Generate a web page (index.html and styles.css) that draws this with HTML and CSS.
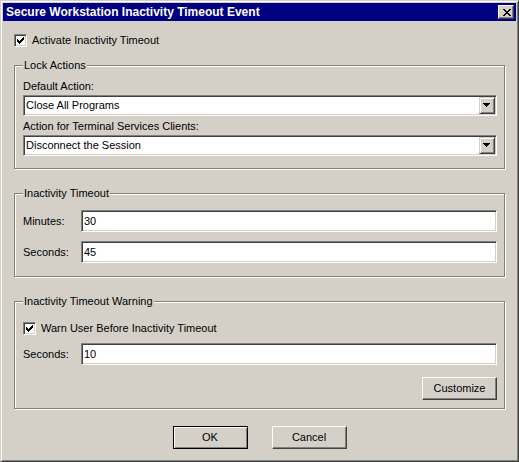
FILE: index.html
```html
<!DOCTYPE html>
<html lang="en">
<head>
<meta charset="utf-8">
<title>Secure Workstation Inactivity Timeout Event</title>
<link rel="stylesheet" href="styles.css">
</head>
<body>
<div class="window">
  <div class="titlebar">
    <span class="title">Secure Workstation Inactivity Timeout Event</span>
    <span class="caption-btn">
      <svg width="8" height="7" viewBox="0 0 8 7" shape-rendering="crispEdges"><path fill="#000" d="M0 0h2v1h-2zM6 0h2v1h-2zM1 1h2v1h-2zM5 1h2v1h-2zM2 2h4v1h-4zM3 3h2v1h-2zM2 4h4v1h-4zM1 5h2v1h-2zM5 5h2v1h-2zM0 6h2v1h-2zM6 6h2v1h-2z"/></svg>
    </span>
  </div>
  <div class="content">
    <div class="check">
      <span class="box"><svg width="9" height="9" viewBox="0 0 9 9" shape-rendering="crispEdges"><path fill="#000" d="M7 1h1v1h-1zM6 2h2v1h-2zM1 3h1v1h-1zM5 3h3v1h-3zM1 4h2v1h-2zM4 4h3v1h-3zM1 5h5v1h-5zM2 6h3v1h-3zM3 7h1v1h-1z"/></svg></span>
      <span>Activate Inactivity Timeout</span>
    </div>

    <fieldset class="group lock">
      <legend>Lock Actions</legend>
      <div class="field">
        <div class="field-label">Default Action:</div>
        <div class="combo">
          <span class="combo-text">Close All Programs</span>
          <span class="drop"><svg width="7" height="4" viewBox="0 0 7 4" shape-rendering="crispEdges"><path fill="#000" d="M0 0h7v1h-7zM1 1h5v1h-5zM2 2h3v1h-3zM3 3h1v1h-1z"/></svg></span>
        </div>
      </div>
      <div class="field field-next">
        <div class="field-label">Action for Terminal Services Clients:</div>
        <div class="combo">
          <span class="combo-text">Disconnect the Session</span>
          <span class="drop"><svg width="7" height="4" viewBox="0 0 7 4" shape-rendering="crispEdges"><path fill="#000" d="M0 0h7v1h-7zM1 1h5v1h-5zM2 2h3v1h-3zM3 3h1v1h-1z"/></svg></span>
        </div>
      </div>
    </fieldset>

    <fieldset class="group timeout">
      <legend>Inactivity Timeout</legend>
      <div class="row">
        <span class="row-label">Minutes:</span>
        <input class="edit" type="text" value="30">
      </div>
      <div class="row row-next">
        <span class="row-label">Seconds:</span>
        <input class="edit" type="text" value="45">
      </div>
    </fieldset>

    <fieldset class="group warning">
      <legend>Inactivity Timeout Warning</legend>
      <div class="check">
        <span class="box"><svg width="9" height="9" viewBox="0 0 9 9" shape-rendering="crispEdges"><path fill="#000" d="M7 1h1v1h-1zM6 2h2v1h-2zM1 3h1v1h-1zM5 3h3v1h-3zM1 4h2v1h-2zM4 4h3v1h-3zM1 5h5v1h-5zM2 6h3v1h-3zM3 7h1v1h-1z"/></svg></span>
        <span>Warn User Before Inactivity Timeout</span>
      </div>
      <div class="row warn-row">
        <span class="row-label">Seconds:</span>
        <input class="edit" type="text" value="10">
      </div>
      <div class="group-actions">
        <button class="btn" type="button">Customize</button>
      </div>
    </fieldset>

    <div class="dialog-buttons">
      <button class="btn default" type="button">OK</button>
      <button class="btn" type="button">Cancel</button>
    </div>
  </div>
</div>
</body>
</html>
```

FILE: styles.css
```css
* {
  box-sizing: border-box;
}

html,
body {
  margin: 0;
  background: #d4d0c8;
}

body {
  font-family: "Liberation Sans", Arial, sans-serif;
  font-size: 11px;
  line-height: 13px;
  color: #000;
}

.window {
  width: 519px;
  height: 462px;
  border: 1px solid;
  border-color: #d4d0c8 #404040 #404040 #d4d0c8;
  box-shadow: inset 1px 1px #fff, inset -1px -1px #808080;
  padding: 2px;
  display: flex;
  flex-direction: column;
}

.titlebar {
  height: 18px;
  flex: none;
  background: #000080;
  color: #fff;
  display: flex;
  align-items: center;
  justify-content: space-between;
  padding: 0 2px 0 3px;
}

.title {
  font-weight: bold;
  font-size: 12px;
  line-height: 18px;
  white-space: nowrap;
}

.caption-btn {
  width: 16px;
  height: 14px;
  border: 1px solid;
  border-color: #fff #404040 #404040 #fff;
  box-shadow: inset -1px -1px #808080;
  background: #d4d0c8;
}

.caption-btn svg {
  display: block;
  margin: 3px 0 0 4px;
}

.content {
  padding: 13px 11px 0;
  display: flex;
  flex-direction: column;
}

.check {
  display: flex;
  align-items: center;
  gap: 5px;
  height: 13px;
  white-space: nowrap;
}

.box {
  width: 13px;
  height: 13px;
  flex: none;
  padding: 1px;
  border: 1px solid;
  border-color: #808080 #fff #fff #808080;
  box-shadow: inset 1px 1px #404040, inset -1px -1px #d4d0c8;
  background: #fff;
}

.box svg {
  display: block;
}

.group {
  width: 491px;
  min-width: 0;
  margin: 12px 0 0;
  border: 1px solid #808080;
  box-shadow: inset 1px 1px #fff, 1px 1px #fff;
  padding: 8px 7px 12px 8px;
}

.group legend {
  padding: 0 1px;
  line-height: 13px;
  background: #d4d0c8;
}

.timeout,
.warning {
  margin-top: 18px;
}

.timeout {
  padding-top: 10px;
  padding-bottom: 13px;
}

.warning {
  padding-top: 14px;
  padding-bottom: 8px;
}

.field-label {
  margin-bottom: 2px;
  white-space: nowrap;
}

.field-next {
  margin-top: 4px;
}

.combo {
  height: 21px;
  display: flex;
  padding: 1px;
  border: 1px solid;
  border-color: #808080 #fff #fff #808080;
  box-shadow: inset 1px 1px #404040, inset -1px -1px #d4d0c8;
  background: #fff;
}

.combo-text {
  flex: 1;
  padding: 2px 0 0 1px;
  line-height: 13px;
  white-space: nowrap;
}

.drop {
  width: 16px;
  height: 17px;
  flex: none;
  border: 1px solid;
  border-color: #d4d0c8 #404040 #404040 #d4d0c8;
  box-shadow: inset 1px 1px #fff, inset -1px -1px #808080;
  background: #d4d0c8;
}

.drop svg {
  display: block;
  margin: 5px 0 0 3px;
}

.row {
  display: flex;
  align-items: center;
  height: 22px;
}

.row-next {
  margin-top: 9px;
}

.warn-row {
  margin-top: 8px;
}

.row-label {
  width: 58px;
  flex: none;
}

.edit {
  flex: 1;
  width: 0;
  min-width: 0;
  height: 22px;
  margin: 0;
  padding: 0 2px;
  border: 1px solid;
  border-color: #808080 #fff #fff #808080;
  box-shadow: inset 1px 1px #404040, inset -1px -1px #d4d0c8;
  background: #fff;
  color: #000;
  font: inherit;
  outline: none;
}

.group-actions {
  display: flex;
  justify-content: flex-end;
  margin-top: 12px;
}

.btn {
  width: 75px;
  height: 23px;
  margin: 0;
  padding: 0;
  border: 1px solid;
  border-color: #fff #404040 #404040 #fff;
  box-shadow: inset -1px -1px #808080;
  background: #d4d0c8;
  color: #000;
  font: inherit;
}

.btn.default {
  border-color: #000;
  box-shadow: inset 1px 1px #fff, inset -1px -1px #808080;
}

.dialog-buttons {
  display: flex;
  justify-content: center;
  gap: 24px;
  margin-top: 17px;
}
```
